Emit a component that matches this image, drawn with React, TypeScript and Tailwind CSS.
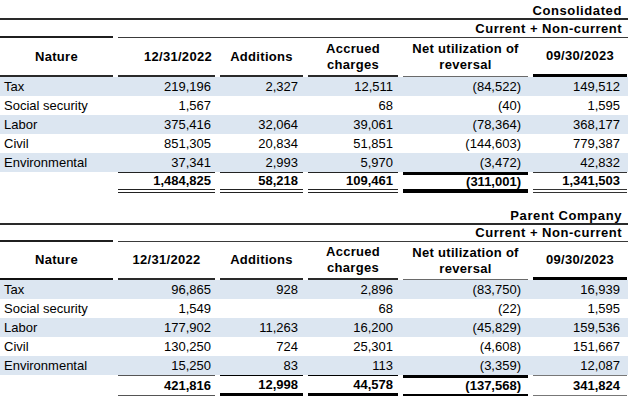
import React from "react"

type Row = [string, string, string, string, string, string]

const consolidated: Row[] = [
  ["Tax", "219,196", "2,327", "12,511", "(84,522)", "149,512"],
  ["Social security", "1,567", "", "68", "(40)", "1,595"],
  ["Labor", "375,416", "32,064", "39,061", "(78,364)", "368,177"],
  ["Civil", "851,305", "20,834", "51,851", "(144,603)", "779,387"],
  ["Environmental", "37,341", "2,993", "5,970", "(3,472)", "42,832"],
]
const consolidatedTotal = ["", "1,484,825", "58,218", "109,461", "(311,001)", "1,341,503"]

const parent: Row[] = [
  ["Tax", "96,865", "928", "2,896", "(83,750)", "16,939"],
  ["Social security", "1,549", "", "68", "(22)", "1,595"],
  ["Labor", "177,902", "11,263", "16,200", "(45,829)", "159,536"],
  ["Civil", "130,250", "724", "25,301", "(4,608)", "151,667"],
  ["Environmental", "15,250", "83", "113", "(3,359)", "12,087"],
]
const parentTotal = ["", "421,816", "12,998", "44,578", "(137,568)", "341,824"]

// same column grid for every row so the rule segments line up
const cols = "grid grid-cols-[113px_97px_83px_90px_125px_94px] gap-x-[5px]"

// padding per column for the figures
const pad = ["pl-[4px]", "pr-[4px]", "pr-[5px]", "pr-[5px]", "pr-[7px]", "pr-[7px]"]

function Section({
  title,
  rows,
  total,
  datesCentered,
  subClass,
  headClass,
  totalTop,
  totalBottom,
  headLines,
}: {
  title: string
  rows: Row[]
  total: string[]
  datesCentered: boolean
  subClass: string
  headClass: string
  totalTop: string[]
  totalBottom: string[]
  headLines: string[]
}) {
  return (
    <div>
      <div className="h-[20px] border-b-2 border-[#2a2a2a] pt-[4px] leading-[14px] text-right pr-[6px] font-bold tracking-[0.6px]">
        {title}
      </div>
      <div className={`flex ${subClass}`}>
        <div className="w-[113px] border-b-2 border-[#1f1f1f]" />
        <div className="flex-1 ml-[5px] border-b-[1.5px] border-[#3a3a3a] leading-[14px] text-right pr-[6px] font-bold tracking-[0.5px]">
          Current + Non-current
        </div>
      </div>

      <div className={`${cols} ${headClass} font-bold tracking-[0.3px] leading-[16px]`}>
        <div className={`flex items-center justify-center ${headLines[0]}`}>Nature</div>
        <div
          className={`flex items-center ${datesCentered ? "justify-center" : "justify-end pr-[3px]"} ${headLines[1]}`}
        >
          12/31/2022
        </div>
        <div className={`flex items-center justify-center ${headLines[2]}`}>Additions</div>
        <div className={`flex items-center justify-center text-center ${headLines[3]}`}>
          Accrued
          <br />
          charges
        </div>
        <div className={`flex items-center justify-center text-center ${headLines[4]}`}>
          Net utilization of
          <br />
          reversal
        </div>
        <div className={`flex items-center justify-center ${headLines[5]}`}>09/30/2023</div>
      </div>

      {rows.map((r, i) => (
        <div key={r[0]} className={`${cols} h-[19px] leading-[19px] ${i % 2 === 0 ? "bg-[#dce6f1]" : ""}`}>
          {r.map((v, j) => (
            <div key={j} className={`${j === 0 ? "text-left" : "text-right"} ${pad[j]} whitespace-nowrap`}>
              {v}
            </div>
          ))}
        </div>
      ))}

      <div className={`${cols} font-bold`}>
        {total.map((v, j) => (
          <div
            key={j}
            className={`h-[21px] flex items-center justify-end ${pad[j]} ${totalTop[j]} ${totalBottom[j]}`}
          >
            {v}
          </div>
        ))}
      </div>
    </div>
  )
}

export default function App() {
  return (
    <div
      className="w-[628px] h-[403px] bg-white text-black text-[13px] overflow-hidden"
      style={{ fontFamily: '"Liberation Sans", Arial, sans-serif' }}
    >
      <Section
        title="Consolidated"
        rows={consolidated}
        total={consolidatedTotal}
        datesCentered={false}
        subClass="h-[18px] pt-[2px]"
        headClass="h-[39px]"
        headLines={[
          "border-b-2 border-[#2a2a2a]",
          "border-b-2 border-[#2a2a2a]",
          "border-b-2 border-[#2a2a2a]",
          "border-b-2 border-[#2a2a2a]",
          "border-b-[1.5px] border-[#6a6a6a]",
          "border-b-[3px] border-black",
        ]}
        totalTop={[
          "",
          "border-t border-[#222]",
          "border-t border-[#222]",
          "border-t border-[#222]",
          "border-t-[3px] border-black",
          "border-t-[1.5px] border-[#333]",
        ]}
        totalBottom={[
          "",
          "border-b-[4px] border-double border-[#222]",
          "border-b-[4px] border-double border-[#222]",
          "border-b-[4px] border-double border-[#222]",
          "border-b-[4px] border-black",
          "border-b-[4px] border-double border-[#222]",
        ]}
      />
      <div className="h-[12px]" />
      <Section
        title="Parent Company"
        rows={parent}
        total={parentTotal}
        datesCentered={true}
        subClass="h-[17px] pt-[1px]"
        headClass="h-[38px]"
        headLines={[
          "border-b-2 border-[#111]",
          "border-b-2 border-[#2a2a2a]",
          "border-b-2 border-[#2a2a2a]",
          "border-b-2 border-[#2a2a2a]",
          "border-b-[1.5px] border-[#6a6a6a]",
          "border-b-[3px] border-black",
        ]}
        totalTop={[
          "",
          "border-t-[1.5px] border-[#333]",
          "border-t-[1.5px] border-[#333]",
          "border-t-[1.5px] border-[#333]",
          "border-t-[3px] border-black",
          "border-t-[1.5px] border-[#333]",
        ]}
        totalBottom={[
          "",
          "border-b-[1.5px] border-[#555]",
          "border-b-[3px] border-black",
          "border-b-[3px] border-black",
          "border-b-[2px] border-[#444]",
          "border-b-[1.5px] border-[#777]",
        ]}
      />
    </div>
  )
}
